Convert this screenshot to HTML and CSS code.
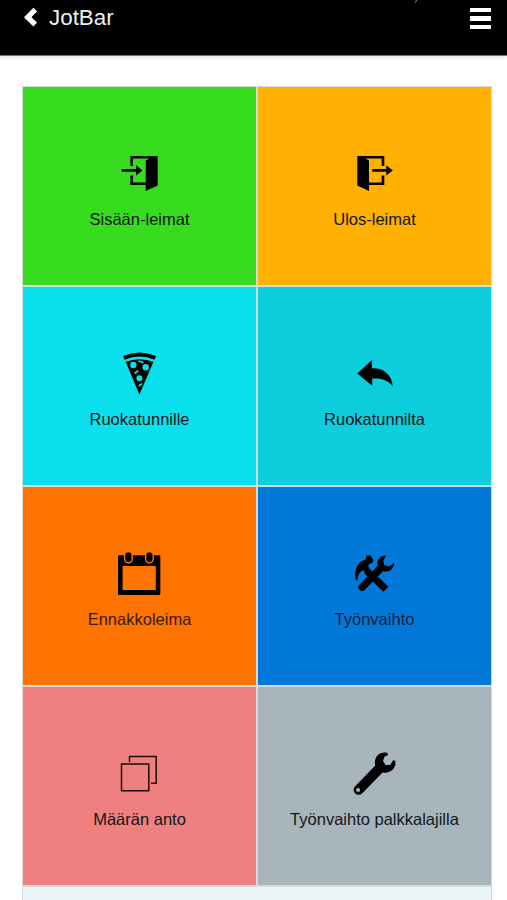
FILE: index.html
```html
<!DOCTYPE html>
<html lang="fi">
<head>
<meta charset="utf-8">
<title>JotBar</title>
<link rel="stylesheet" href="styles.css">
</head>
<body>
<header class="bar">
  <a class="back"><svg class="chevron" width="16" height="22" viewBox="0 0 16 22"><path d="M13.200 2.700 5.700 10.200l7.500 7.500" fill="none" stroke="#fff" stroke-width="5.200"/></svg><span>JotBar</span></a>
  <div class="menu"><i></i><i></i><i></i></div>
  <svg class="mark" width="4" height="3" viewBox="0 0 4 3"><path d="M2.500 0 1.500 2.500" stroke="#999"/></svg>
</header>
<main class="grid">
  <div class="tile green">
    <svg class="icon" viewBox="0 0 49 50"><path d="M16.700 16V7.200H41M16.700 25.500V33.800H31" fill="none" stroke="#000" stroke-width="2.600"/><path d="M42.700 6v29.500L30.700 41V10.500L39 6zM6.700 19H21v-3.800l6.500 5.200-6.500 5.200v-3.800H6.700z"/></svg>
    <span>Sisään-leimat</span>
  </div>
  <div class="tile amber">
    <svg class="icon" viewBox="0 0 49 50"><path d="M9 7.200h24V16M19 33.800h14v-8.300" fill="none" stroke="#000" stroke-width="2.600"/><path d="M7.300 6 11 6l8 4.500V41L7.300 35.500zM22.300 19h14v-3.800l6.500 5.200-6.500 5.200v-3.800h-14z"/></svg>
    <span>Ulos-leimat</span>
  </div>
  <div class="tile cyan">
    <svg class="icon" viewBox="0 0 49 50"><path d="M8.800 7.900Q24.500 1 40.300 7.900" fill="none" stroke="#000" stroke-width="4"/><path d="M10.700 11.800Q24.500 6.500 38.500 11.800L24.400 44.500z"/><g fill="#0be1ee"><circle cx="18.300" cy="15" r="3.200"/><circle cx="30.700" cy="17.200" r="3.200"/><circle cx="24.400" cy="28.300" r="3"/></g><path d="m23.500 11 5 1.600M19.500 23.500l3.700-2.700M23.800 36l3.200-2.400" stroke="#0be1ee" stroke-width="1.700"/></svg>
    <span>Ruokatunnille</span>
  </div>
  <div class="tile teal">
    <svg class="icon" viewBox="0 0 49 50"><path d="M7.300 23.600 21.900 10v8.200C33 17.800 41.500 23.500 42.800 36.300 38 30 31.500 27.800 22.200 28.500v7.300z"/></svg>
    <span>Ruokatunnilta</span>
  </div>
  <div class="tile orange">
    <svg class="icon" viewBox="0 0 49 50"><path fill-rule="evenodd" d="M4 5.200h40.400q.9 0 .9.900V44q0 1-.9 1H4q-1 0-1-1V6.100q0-.9 1-.9zM7.600 16v24h33.200V16z"/><g stroke="#ff7300" stroke-width="1.400"><rect x="9.600" y="1.500" width="7.600" height="11.300" rx="3.800"/><rect x="30.600" y="1.500" width="7.600" height="11.300" rx="3.800"/></g></svg>
    <span>Ennakkoleima</span>
  </div>
  <div class="tile blue">
    <svg class="icon" viewBox="0 0 49 50"><path d="M6 30.500C4.300 25 5.500 16 10.500 11.800L15.800 9.500l.4-3.700 4.300-.3 3 4.800-1.300 2.700-3 .8-1 2.800 2.600 3.400L38.500 36.700 33.300 41.700 15 24l-1.500-4C9.500 21.500 7.600 25.500 7.700 30z"/><path d="M36.200 5.500C30.500 5.200 26.200 9.800 27.700 15.800L9.500 34.700a3.700 3.700 0 0 0 0 5 3.700 3.700 0 0 0 5.300.1L32.800 21.300c6 1.500 11.700-2.500 11.200-8.800l-4.300 4-5.500-1.200-.9-4.600z"/></svg>
    <span>Työnvaihto</span>
  </div>
  <div class="tile pink">
    <svg class="icon" viewBox="0 0 49 50"><path d="M6.500 14h27.300v26.800H6.500zM14.500 12V6.500h26.700v26.800H36" fill="none" stroke="#1d090a" stroke-width="1.500"/></svg>
    <span>Määrän anto</span>
  </div>
  <div class="tile gray">
    <svg class="icon" viewBox="0 0 49 50"><path fill-rule="evenodd" d="M37.500 3C30 .8 23.200 7 25.300 15.500L5.200 36.200a4.800 4.800 0 0 0 0 7.200 4.800 4.800 0 0 0 6.900 0L32.500 22.500C40 24 47 18 45.200 10.700L43 10.200l-2.500 4.600-4.700.4-2.800-4 1.400-4.400 3.700-1.800zM8.100 38a2 2 0 1 0 0 4 2 2 0 0 0 0-4z"/></svg>
    <span>Työnvaihto palkkalajilla</span>
  </div>
  <div class="footer-row"></div>
</main>
</body>
</html>
```
FILE: styles.css
```css
* { box-sizing: border-box; }
body {
  margin: 0;
  height: 900px;
  overflow: hidden;
  background: #fff;
  font-family: "Liberation Sans", Arial, sans-serif;
}
.bar {
  position: relative;
  display: flex;
  justify-content: space-between;
  align-items: flex-start;
  height: 56px;
  padding: 6px 16px 0 22px;
  background: #000;
  border-bottom: 1px solid #777;
  box-shadow: 0 1px 4px #ddd;
}
.back {
  display: flex;
  align-items: center;
  color: #eee;
  font-size: 22.4px;
  line-height: 24px;
}
.chevron { margin-right: 11px; }
.menu {
  display: flex;
  flex-direction: column;
  gap: 4px;
  padding-top: 2px;
}
.menu i { width: 21px; height: 4.4px; background: #fff; }
.mark { position: absolute; left: 414px; top: 0; }
.grid {
  display: grid;
  grid-template-columns: 233px 233px;
  grid-template-rows: repeat(4, 198px) 20px;
  gap: 2px;
  width: 470px;
  margin: 30px 0 0 22px;
  padding: 1px;
  background: #d5dbd6;
}
.tile {
  display: flex;
  flex-direction: column;
  align-items: center;
  padding-top: 63px;
  color: #101719;
  font-size: 16.5px;
  line-height: 20px;
  white-space: nowrap;
}
.icon { display: block; width: 49px; height: 50px; margin-bottom: 9px; }
.green { background: #36dc1d; }
.amber { background: #ffb000; }
.cyan { background: #0be1ee; }
.teal { background: #0dcedd; }
.orange { background: #ff7300; }
.blue { background: #0278d9; }
.pink { background: #f08080; }
.gray { background: #a9b5bc; }
.orange span { color: #3b1a00; }
.blue span { color: #03203c; }
.footer-row { grid-column: 1 / 3; background: #eaf3f6; }
```
